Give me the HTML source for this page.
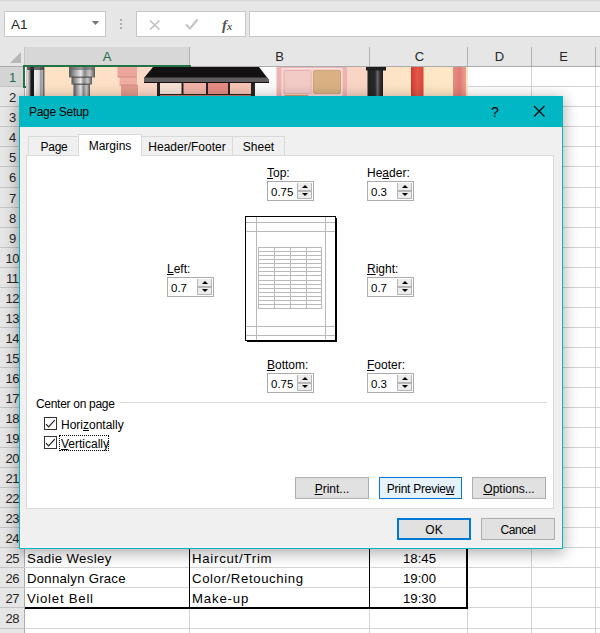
<!DOCTYPE html>
<html><head><meta charset="utf-8"><title>Page Setup</title>
<style>
*{box-sizing:border-box;margin:0;padding:0}
html,body{width:600px;height:633px;overflow:hidden;background:#fff}
body{position:relative;font-family:"Liberation Sans",sans-serif;color:#000}
.abs{position:absolute}
#top{left:0;top:0;width:600px;height:47px;background:#e6e6e6}
#topline{left:0;top:0;width:600px;height:1px;background:#d6d6d6}
.box{background:#fff;border:1px solid #c6c6c6}
#colhdr{left:0;top:47px;width:600px;height:20px;background:#e6e6e6;border-bottom:1px solid #ababab}
.ch{top:47px;height:19px;line-height:19px;text-align:center;font-size:13px;color:#262626;border-right:1px solid #b1b1b1}
.rh{left:0;width:25px;text-align:center;font-size:13px;padding-left:0.5px;letter-spacing:-0.6px;color:#262626;background:#e6e6e6;border-bottom:1px solid #c4c4c4;border-right:1px solid #ababab}
.gv{top:67px;width:1px;height:566px;background:#d4d4d4}
.gh{left:24px;width:576px;height:1px;background:#d4d4d4}
.cell{font-size:13.2px;height:20px;line-height:20px;white-space:nowrap;color:#000}
#dlg{left:19px;top:96px;width:544px;height:453px;background:#f0f0f0;border:1px solid #00b7c3;box-shadow:0 3px 14px 1px rgba(0,0,0,.33)}
#title{left:0;top:0;width:542px;height:30px;background:#00b7c3}
.d{font-size:12px;color:#000;white-space:nowrap;margin-top:1px}
.tab{top:39px;height:19px;line-height:20px;text-align:center;font-size:12px;background:#f0f0f0;border:1px solid #d9d9d9;border-bottom:none}
.btn{height:22px;line-height:22px;text-align:center;font-size:12px;background:#e1e1e1;border:1px solid #adadad}
.spin{width:47px;height:20px;background:#fff;border:1px solid #ababab}
.spin span{position:absolute;left:3px;top:1px;line-height:18px;font-size:11.5px}
.spin i{position:absolute;left:29px;top:1px;width:15px;height:16px;background:#ececec;border:1px solid #b6b6b6;border-top:none}
.spin i:before{content:"";position:absolute;left:0;top:7px;width:13px;height:1.5px;background:#b6b6b6}
.spin b{position:absolute;left:3.5px;width:0;height:0;border-left:3px solid transparent;border-right:3px solid transparent}
.spin b.up{top:2px;border-bottom:3px solid #000}
.spin b.dn{top:10px;border-top:3px solid #000}
u{text-decoration:underline;text-underline-offset:0.6px;text-decoration-thickness:1px}
</style></head><body>
<div id="top" class="abs"></div>
<div id="topline" class="abs"></div>
<div class="abs box" style="left:4px;top:11px;width:102px;height:26px"></div>
<div class="abs" style="left:11px;top:11px;height:26px;line-height:27px;font-size:13.5px;color:#262626">A1</div>
<svg class="abs" style="left:90px;top:19px" width="12" height="8" viewBox="0 0 12 8"><path d="M1.8 2 H9.2 L5.5 6 Z" fill="#777"/></svg>
<div class="abs" style="left:120px;top:19px;width:2px;height:2px;background:#b0b0b0;box-shadow:0 4px 0 #b0b0b0,0 8px 0 #b0b0b0"></div>
<div class="abs box" style="left:136px;top:11px;width:110px;height:26px"></div>
<div class="abs box" style="left:249px;top:11px;width:360px;height:26px"></div>
<svg class="abs" style="left:136px;top:11px" width="110" height="26" viewBox="0 0 110 26">
<path d="M14 9.5 L23.5 18.5 M23.5 9.5 L14 18.5" stroke="#c0c0c0" stroke-width="1.7" fill="none"/>
<path d="M50 13.5 L54 17.5 L61.5 8.5" stroke="#c4c4c4" stroke-width="2.1" fill="none"/>
<text x="86" y="18.5" font-family="Liberation Serif,serif" font-style="italic" font-weight="bold" font-size="15" fill="#555">f</text>
<text x="91" y="18.5" font-family="Liberation Serif,serif" font-style="italic" font-weight="bold" font-size="10.5" fill="#555">x</text>
</svg>

<div id="colhdr" class="abs"></div>
<div class="abs" style="left:10px;top:52px;width:0;height:0;border-left:11px solid transparent;border-bottom:11px solid #b8b8b8"></div>
<div class="abs" style="left:24px;top:47px;width:1px;height:19px;background:#c4c4c4"></div>
<div class="abs ch" style="left:25px;width:165px;background:#d7d7d7;color:#1e6b47;border-bottom:2px solid #217346;height:20px">A</div>
<div class="abs ch" style="left:190px;width:180px">B</div>
<div class="abs ch" style="left:370px;width:98px;padding-left:2px">C</div>
<div class="abs ch" style="left:468px;width:64px">D</div>
<div class="abs ch" style="left:532px;width:64px">E</div>
<div class="abs gv" style="left:189px"></div>
<div class="abs gv" style="left:369px"></div>
<div class="abs gv" style="left:467px"></div>
<div class="abs gv" style="left:531px"></div>
<div class="abs gv" style="left:595px"></div>
<div class="abs gh" style="top:86px"></div>
<div class="abs rh" style="top:67px;height:20px;line-height:21px;background:#d4d4d4;color:#1e6b47">1</div>
<div class="abs gh" style="top:106px"></div>
<div class="abs rh" style="top:87px;height:20px;line-height:21px">2</div>
<div class="abs gh" style="top:126px"></div>
<div class="abs rh" style="top:107px;height:20px;line-height:21px">3</div>
<div class="abs gh" style="top:146px"></div>
<div class="abs rh" style="top:127px;height:20px;line-height:21px">4</div>
<div class="abs gh" style="top:166px"></div>
<div class="abs rh" style="top:147px;height:20px;line-height:21px">5</div>
<div class="abs gh" style="top:187px"></div>
<div class="abs rh" style="top:167px;height:21px;line-height:22px">6</div>
<div class="abs gh" style="top:207px"></div>
<div class="abs rh" style="top:188px;height:20px;line-height:21px">7</div>
<div class="abs gh" style="top:227px"></div>
<div class="abs rh" style="top:208px;height:20px;line-height:21px">8</div>
<div class="abs gh" style="top:247px"></div>
<div class="abs rh" style="top:228px;height:20px;line-height:21px">9</div>
<div class="abs gh" style="top:267px"></div>
<div class="abs rh" style="top:248px;height:20px;line-height:21px">10</div>
<div class="abs gh" style="top:287px"></div>
<div class="abs rh" style="top:268px;height:20px;line-height:21px">11</div>
<div class="abs gh" style="top:307px"></div>
<div class="abs rh" style="top:288px;height:20px;line-height:21px">12</div>
<div class="abs gh" style="top:327px"></div>
<div class="abs rh" style="top:308px;height:20px;line-height:21px">13</div>
<div class="abs gh" style="top:347px"></div>
<div class="abs rh" style="top:328px;height:20px;line-height:21px">14</div>
<div class="abs gh" style="top:367px"></div>
<div class="abs rh" style="top:348px;height:20px;line-height:21px">15</div>
<div class="abs gh" style="top:387px"></div>
<div class="abs rh" style="top:368px;height:20px;line-height:21px">16</div>
<div class="abs gh" style="top:407px"></div>
<div class="abs rh" style="top:388px;height:20px;line-height:21px">17</div>
<div class="abs gh" style="top:427px"></div>
<div class="abs rh" style="top:408px;height:20px;line-height:21px">18</div>
<div class="abs gh" style="top:447px"></div>
<div class="abs rh" style="top:428px;height:20px;line-height:21px">19</div>
<div class="abs gh" style="top:467px"></div>
<div class="abs rh" style="top:448px;height:20px;line-height:21px">20</div>
<div class="abs gh" style="top:487px"></div>
<div class="abs rh" style="top:468px;height:20px;line-height:21px">21</div>
<div class="abs gh" style="top:507px"></div>
<div class="abs rh" style="top:488px;height:20px;line-height:21px">22</div>
<div class="abs gh" style="top:527px"></div>
<div class="abs rh" style="top:508px;height:20px;line-height:21px">23</div>
<div class="abs gh" style="top:547px"></div>
<div class="abs rh" style="top:528px;height:20px;line-height:21px">24</div>
<div class="abs gh" style="top:567px"></div>
<div class="abs rh" style="top:548px;height:20px;line-height:21px">25</div>
<div class="abs gh" style="top:587px"></div>
<div class="abs rh" style="top:568px;height:20px;line-height:21px">26</div>
<div class="abs gh" style="top:607px"></div>
<div class="abs rh" style="top:588px;height:20px;line-height:21px">27</div>
<div class="abs gh" style="top:628px"></div>
<div class="abs rh" style="top:608px;height:21px;line-height:22px">28</div>
<div class="abs gh" style="top:648px"></div>
<div class="abs rh" style="top:629px;height:20px;line-height:21px">29</div>
<svg class="abs" style="left:25px;top:67px" width="443" height="30" viewBox="25 67 443 30">
<defs>
<linearGradient id="bg" x1="0" x2="1"><stop offset="0" stop-color="#fde3c6"/><stop offset=".2" stop-color="#fde0c6"/><stop offset=".27" stop-color="#fbd8c8"/><stop offset=".72" stop-color="#f9d3c4"/><stop offset=".78" stop-color="#fad6c4"/><stop offset=".82" stop-color="#fde4c6"/><stop offset="1" stop-color="#fde9c6"/></linearGradient>
<linearGradient id="t1" x1="0" x2="1"><stop offset="0" stop-color="#d8706a"/><stop offset=".04" stop-color="#e8e8e8"/><stop offset=".1" stop-color="#d0d0d0"/><stop offset=".2" stop-color="#909090"/><stop offset=".27" stop-color="#1a1a1a"/><stop offset=".41" stop-color="#1a1a1a"/><stop offset=".46" stop-color="#f0f0f0"/><stop offset=".72" stop-color="#e0e0e0"/><stop offset=".78" stop-color="#a0a0a0"/><stop offset=".92" stop-color="#b0b0b0"/><stop offset=".96" stop-color="#444"/><stop offset="1" stop-color="#666"/></linearGradient>
<linearGradient id="t2" x1="0" x2="1"><stop offset="0" stop-color="#555"/><stop offset=".2" stop-color="#9a9a9a"/><stop offset=".45" stop-color="#e8e8e8"/><stop offset=".6" stop-color="#8a8a8a"/><stop offset=".8" stop-color="#c8c8c8"/><stop offset="1" stop-color="#555"/></linearGradient>
<linearGradient id="t3" x1="0" x2="1"><stop offset="0" stop-color="#222"/><stop offset=".5" stop-color="#2a2a2a"/><stop offset=".65" stop-color="#6a6a6a"/><stop offset=".8" stop-color="#333"/><stop offset="1" stop-color="#1c1c1c"/></linearGradient>
<linearGradient id="t4" x1="0" x2="1"><stop offset="0" stop-color="#d23a2e"/><stop offset=".5" stop-color="#e4584a"/><stop offset="1" stop-color="#d8463a"/></linearGradient>
<linearGradient id="t5" x1="0" x2="1"><stop offset="0" stop-color="#e88c84"/><stop offset=".5" stop-color="#e07a74"/><stop offset="1" stop-color="#eea096"/></linearGradient>
</defs>
<rect x="25" y="67" width="443" height="30" fill="url(#bg)"/>
<!-- tube 1 -->
<rect x="26" y="67" width="18.5" height="30" fill="url(#t1)"/><rect x="27" y="67" width="17" height="3" fill="#333" opacity=".7"/>
<!-- tube 2 -->
<rect x="73.5" y="84" width="16.5" height="13" fill="url(#t2)"/>
<rect x="71.5" y="77" width="20.5" height="7.5" fill="url(#t2)"/>
<rect x="69" y="67" width="26" height="10.5" fill="url(#t2)"/>
<rect x="69" y="67" width="26" height="3" fill="#666" opacity=".6"/>
<rect x="71.5" y="76.5" width="20.5" height="1.5" fill="#444" opacity=".7"/>
<rect x="73.5" y="83.5" width="16.5" height="1.5" fill="#444" opacity=".7"/>
<!-- pink lipstick -->
<rect x="121" y="85" width="17" height="12" fill="#e39a8e"/>
<rect x="119.5" y="77" width="17.5" height="8" fill="#efaea2"/>
<rect x="117.5" y="67" width="19.5" height="10" fill="#eba59a"/>
<rect x="119.5" y="84.5" width="17.5" height="1" fill="#d88a80"/>
<rect x="117.5" y="76.5" width="19.5" height="1" fill="#d88a80"/>
<!-- palette -->
<rect x="255" y="67" width="22" height="30" fill="#fbfbfb"/>
<rect x="157" y="80" width="98" height="17" fill="#2c2223"/>
<rect x="160" y="83" width="21.5" height="11" fill="#f8e2d6"/>
<rect x="183.5" y="83" width="22.5" height="11" fill="#f0b4a6"/>
<rect x="208" y="83" width="20" height="11" fill="#e68c84"/>
<rect x="230" y="83" width="21" height="11" fill="#f6c4b4"/>
<rect x="160" y="95" width="91" height="2" fill="#c87868"/>
<path d="M153 67 H259 L269 80 V83 H144 V78 Z" fill="#141112"/>
<path d="M144 77.5 H267 L269 80 V82 H144 Z" fill="#625e5f"/>
<rect x="147" y="83" width="10" height="14" fill="#fbd8c8"/>
<!-- pink palette -->
<rect x="276.5" y="67" width="70.5" height="30" fill="#efb2b2"/>
<rect x="282" y="68.5" width="60" height="27" fill="#f6d2d0" stroke="#fbe2e0" stroke-width="1"/>
<rect x="284" y="70.5" width="27" height="23" rx="1.5" fill="#f2cac6" stroke="#e3a8a6" stroke-width=".8"/>
<rect x="313.5" y="70.5" width="27" height="23" rx="1.5" fill="#d9b183" stroke="#c89a70" stroke-width=".8"/>
<rect x="284.5" y="95" width="24" height="2" fill="#d39a6a"/>
<!-- black tube -->
<rect x="367.5" y="67" width="15.5" height="30" fill="url(#t3)"/>
<rect x="366" y="67" width="20" height="3.5" fill="#1e1e1e"/>
<!-- red tube -->
<rect x="411" y="67" width="12.5" height="30" fill="url(#t4)"/>
<!-- right pink -->
<rect x="453" y="67" width="13" height="30" fill="url(#t5)"/>
<rect x="466" y="67" width="2" height="30" fill="#fde6c0"/>
</svg>
<div class="abs" style="left:25px;top:67px;width:1px;height:29px;background:#fff"></div>
<div class="abs" style="left:23px;top:65px;width:168px;height:23px;border:2px solid #217346;border-bottom:none;border-right:none"></div>
<div class="abs" style="left:25px;top:86px;width:1px;height:2px;background:#217346"></div>
<div class="abs" style="left:25px;top:548px;width:443px;height:60px;background:#fff"></div>
<div class="abs gh" style="top:567px;width:443px"></div><div class="abs gh" style="top:587px;width:443px"></div>
<div class="abs" style="left:189px;top:548px;width:1px;height:60px;background:#000"></div>
<div class="abs" style="left:369px;top:548px;width:1px;height:60px;background:#000"></div>
<div class="abs" style="left:466px;top:548px;width:2px;height:61px;background:#000"></div>
<div class="abs" style="left:25px;top:607px;width:443px;height:2px;background:#000"></div>
<div class="abs cell" style="left:27px;top:549px;letter-spacing:0.36px">Sadie Wesley</div>
<div class="abs cell" style="left:27px;top:569px;letter-spacing:0.25px">Donnalyn Grace</div>
<div class="abs cell" style="left:27px;top:589px;letter-spacing:0.76px">Violet Bell</div>
<div class="abs cell" style="left:192px;top:549px;letter-spacing:0.75px">Haircut/Trim</div>
<div class="abs cell" style="left:192px;top:569px;letter-spacing:0.61px">Color/Retouching</div>
<div class="abs cell" style="left:192px;top:589px;letter-spacing:0.83px">Make-up</div>
<div class="abs cell" style="left:371px;top:549px;width:97px;text-align:center">18:45</div>
<div class="abs cell" style="left:371px;top:569px;width:97px;text-align:center">19:00</div>
<div class="abs cell" style="left:371px;top:589px;width:97px;text-align:center">19:30</div>

<div id="dlg" class="abs">
<div id="title" class="abs"></div>
<div class="abs" style="left:1px;top:0;width:0;height:0">
<div class="abs d" style="left:8px;top:-1px;height:30px;line-height:31px;letter-spacing:-0.3px">Page Setup</div>
<div class="abs d" style="left:470px;top:-1px;height:30px;line-height:30px;font-size:14px">?</div>
<svg class="abs" style="left:512px;top:8px" width="13" height="13" viewBox="0 0 13 13"><path d="M1 1 L11.5 11.5 M11.5 1 L1 11.5" stroke="#000" stroke-width="1.1" fill="none"/></svg>
<!-- tab pane -->
<div class="abs" style="left:5px;top:58px;width:528px;height:354px;background:#fff;border:1px solid #d9d9d9"></div>
<div class="abs tab" style="left:7px;width:51px;letter-spacing:-0.3px;padding-left:1px">Page</div>
<div class="abs tab" style="left:120px;width:92px">Header/Footer</div>
<div class="abs tab" style="left:211px;width:53px">Sheet</div>
<div class="abs tab" style="left:57px;top:37px;width:64px;height:22px;background:#fff;line-height:22px">Margins</div>
<!-- spinners -->
<div class="abs d" style="left:246px;top:68px"><u>T</u>op:</div>
<div class="abs spin" style="left:246px;top:84px"><span>0.75</span><i><b class="up"></b><b class="dn"></b></i></div>
<div class="abs d" style="left:346px;top:68px">He<u>a</u>der:</div>
<div class="abs spin" style="left:346px;top:84px"><span>0.3</span><i><b class="up"></b><b class="dn"></b></i></div>
<div class="abs d" style="left:146px;top:164px"><u>L</u>eft:</div>
<div class="abs spin" style="left:146px;top:180px"><span>0.7</span><i><b class="up"></b><b class="dn"></b></i></div>
<div class="abs d" style="left:346px;top:164px"><u>R</u>ight:</div>
<div class="abs spin" style="left:346px;top:180px"><span>0.7</span><i><b class="up"></b><b class="dn"></b></i></div>
<div class="abs d" style="left:246px;top:260px"><u>B</u>ottom:</div>
<div class="abs spin" style="left:246px;top:276px"><span>0.75</span><i><b class="up"></b><b class="dn"></b></i></div>
<div class="abs d" style="left:346px;top:260px"><u>F</u>ooter:</div>
<div class="abs spin" style="left:346px;top:276px"><span>0.3</span><i><b class="up"></b><b class="dn"></b></i></div>
<!-- preview -->
<svg class="abs" style="left:219px;top:113px" width="105" height="135" viewBox="0 0 105 135" shape-rendering="crispEdges">
<rect x="5.5" y="6.5" width="90" height="124" fill="#fff" stroke="#000" stroke-width="1"/>
<path d="M96.5 8 V132 M7 131.5 H97" stroke="#000" stroke-width="1" fill="none"/>
<path d="M16.5 7 V130 M85.5 7 V130 M6 12.5 H95 M6 21.5 H95 M6 116.5 H95 M6 125.5 H95 M18.5 37.0 V99.0 M34.5 37.0 V99.0 M50.5 37.0 V99.0 M66.5 37.0 V99.0 M81.5 37.0 V99.0 M18.0 37.5 H82.0 M18.0 41.5 H82.0 M18.0 45.5 H82.0 M18.0 49.5 H82.0 M18.0 53.5 H82.0 M18.0 57.5 H82.0 M18.0 61.5 H82.0 M18.0 65.5 H82.0 M18.0 70.5 H82.0 M18.0 74.5 H82.0 M18.0 78.5 H82.0 M18.0 82.5 H82.0 M18.0 86.5 H82.0 M18.0 90.5 H82.0 M18.0 94.5 H82.0 M18.0 98.5 H82.0 " stroke="#b9b9b9" stroke-width="1" fill="none"/>
</svg>
<!-- center on page -->
<div class="abs" style="left:99px;top:305px;width:427px;height:1px;background:#dcdcdc"></div>
<div class="abs d" style="left:15px;top:299px;line-height:14px;letter-spacing:-0.3px">Center on page</div>
<div class="abs chk" style="left:23px;top:320px"><svg width="13" height="13" viewBox="0 0 13 13" style="display:block"><rect x=".5" y=".5" width="12" height="12" fill="#fff" stroke="#333"/><path d="M2 7.2 L4.6 9.8 L10.8 3.2" stroke="#222" stroke-width="1.2" fill="none"/></svg></div>
<div class="abs d" style="left:40px;top:320px">Hori<u>z</u>ontally</div>
<div class="abs chk" style="left:23px;top:339px"><svg width="13" height="13" viewBox="0 0 13 13" style="display:block"><rect x=".5" y=".5" width="12" height="12" fill="#fff" stroke="#333"/><path d="M2 7.2 L4.6 9.8 L10.8 3.2" stroke="#222" stroke-width="1.2" fill="none"/></svg></div>
<div class="abs d" style="left:40px;top:339px"><u>V</u>ertically</div>
<div class="abs" style="left:38px;top:338px;width:50px;height:16px;border:1px dotted #000"></div>
<!-- buttons -->
<div class="abs btn" style="left:274px;top:380px;width:74px"><u>P</u>rint...</div>
<div class="abs btn" style="left:358px;top:380px;width:83px;background:#e5f1fb;border-color:#0078d7;letter-spacing:-0.25px">Print Previe<u>w</u></div>
<div class="abs btn" style="left:451px;top:380px;width:74px"><u>O</u>ptions...</div>
<div class="abs btn" style="left:376px;top:421px;width:74px;border:2px solid #0078d7;line-height:20px">OK</div>
<div class="abs btn" style="left:460px;top:421px;width:74px;letter-spacing:-0.4px">Cancel</div>
</div>
</div>

</body></html>
